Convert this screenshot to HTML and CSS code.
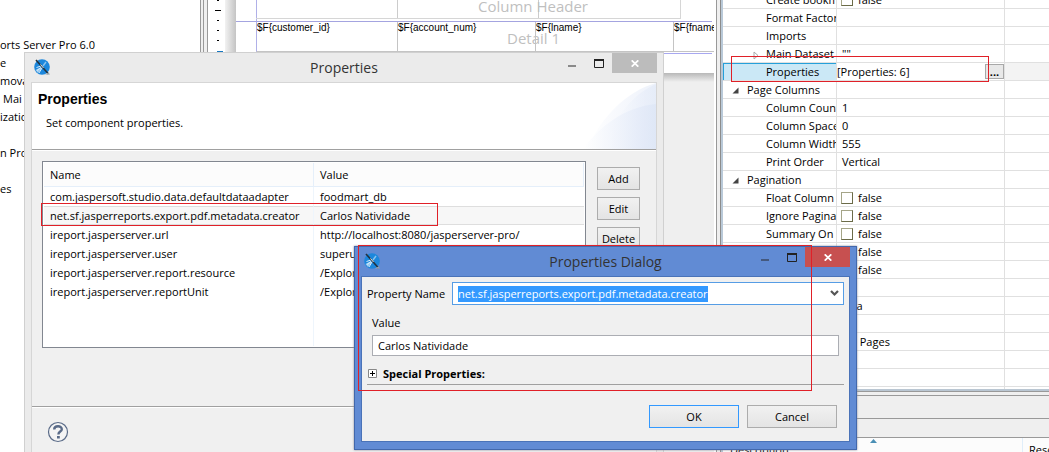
FILE: index.html
```html
<!DOCTYPE html>
<html lang="en">
<head>
<meta charset="utf-8">
<title>Properties</title>
<link rel="stylesheet" href="styles.css">
</head>
<body>
<svg class="defs" width="0" height="0" aria-hidden="true">
  <symbol id="app" viewBox="0 0 16 16">
    <circle cx="8" cy="8" r="7.8" fill="#1c87dc"/>
    <path d="M1.500 11L7 8l1 1.500L4 14z" fill="#9fcdf0"/>
    <path d="M2.500 8.500L7 7M3 11.500l4-3M5 14l3-5" stroke="#d5ebfa" stroke-width="1"/>
    <path d="M9 7l3-4" stroke="#8cc4ee" stroke-width="1.400"/>
    <path d="M2 1l12.500 14" stroke="#22323f" stroke-width="1.600"/>
    <path d="M6.500 5.500l3 3.500" stroke="#e9e5df" stroke-width="1"/>
    <path d="M11 15.500h5l-1.500-2z" fill="#9aa4aa"/>
  </symbol>
  <symbol id="max" viewBox="0 0 10 9">
    <path d="M.5 1.500h9v7h-9z" fill="none" stroke="#222"/><path d="M0 0h10v2H0z" fill="#222"/>
  </symbol>
  <symbol id="x" viewBox="0 0 8 7">
    <path d="M.7.3l6.600 6.400M7.300.3L.7 6.700" stroke="#fff" stroke-width="1.700"/>
  </symbol>
</svg>

<main class="workbench">
  <nav class="tree" aria-label="Repository">
    <span>orts Server Pro 6.0</span><span>e</span><span>mova</span><span class="indent">Mai</span><span>izatio</span><span></span><span>n Pro</span><span></span><span>es</span>
  </nav>
  <div class="sash"></div>
  <section class="editor">
    <svg class="ruler" width="17" height="52" aria-hidden="true">
      <path d="M9 0h2v1H9zM7 10h6v1H7zM9 20h2v1H9zM9 30h2v1H9zM9 40h2v1H9z" fill="#000"/>
      <path d="M9 51h6v1H9z" fill="#1878c0"/>
    </svg>
    <div class="edge"></div>
    <div class="sheet">
      <div class="page">
        <div class="band header"><span class="bandname">Column Header</span></div>
        <div class="band gap"></div>
        <div class="band detail">
          <span class="bandname">Detail 1</span>
          <span class="field f1">$F{customer_id}</span>
          <span class="field f2">$F{account_num}</span>
          <span class="field f3">$F{lname}</span>
          <span class="field f4">$F{fname}</span>
        </div>
      </div>
    </div>
  </section>
  <div class="sash right"></div>
  <aside class="side">
    <div class="props">
      <table class="grid">
        <colgroup><col class="c1"><col class="c2"><col></colgroup>
        <tbody>
          <tr><td>Create bookmarks</td><td><label><input type="checkbox">false</label></td><td></td></tr>
          <tr><td>Format Factory</td><td></td><td></td></tr>
          <tr><td>Imports</td><td></td><td></td></tr>
          <tr class="closed"><td><svg width="6" height="9" aria-hidden="true"><path d="M1 1l4 3.500-4 3.500z" fill="#fff" stroke="#aaa"/></svg>Main Dataset</td><td>""</td><td></td></tr>
          <tr class="current"><td>Properties</td><td><div class="edit"><span>[Properties: 6]</span><button type="button">...</button></div></td><td></td></tr>
          <tr class="group"><td><svg width="7" height="7" aria-hidden="true"><path d="M6.500.5v6h-6z" fill="#444"/></svg>Page Columns</td><td></td><td></td></tr>
          <tr><td>Column Count</td><td>1</td><td></td></tr>
          <tr><td>Column Space</td><td>0</td><td></td></tr>
          <tr><td>Column Width</td><td>555</td><td></td></tr>
          <tr><td>Print Order</td><td>Vertical</td><td></td></tr>
          <tr class="group"><td><svg width="7" height="7" aria-hidden="true"><path d="M6.500.5v6h-6z" fill="#444"/></svg>Pagination</td><td></td><td></td></tr>
          <tr><td>Float Column</td><td><label><input type="checkbox">false</label></td><td></td></tr>
          <tr><td>Ignore Pagination</td><td><label><input type="checkbox">false</label></td><td></td></tr>
          <tr><td>Summary On</td><td><label><input type="checkbox">false</label></td><td></td></tr>
          <tr><td></td><td><label><input type="checkbox">false</label></td><td></td></tr>
          <tr><td></td><td><label><input type="checkbox">false</label></td><td></td></tr>
          <tr><td></td><td></td><td></td></tr>
          <tr><td></td><td>Java</td><td></td></tr>
          <tr><td></td><td></td><td></td></tr>
          <tr><td></td><td>No Pages</td><td></td></tr>
          <tr><td></td><td></td><td></td></tr>
          <tr><td></td><td></td><td></td></tr>
          <tr><td></td><td></td><td></td></tr>
        </tbody>
      </table>
    </div>
    <div class="tabs"></div>
    <div class="bar"></div>
    <div class="problems">
      <span class="desc">Description</span>
      <svg width="7" height="4" aria-hidden="true"><path d="M0 4l3.500-4L7 4z" fill="#4a8fb5"/></svg>
      <span class="res">Resource</span>
    </div>
  </aside>
</main>

<section class="window first" aria-label="Properties">
  <header class="titlebar">
    <svg class="logo" width="16" height="16"><use href="#app"/></svg>
    <h1>Properties</h1>
    <div class="controls">
      <button type="button" class="min" aria-label="Minimize"><i></i></button>
      <button type="button" aria-label="Maximize"><svg width="10" height="9"><use href="#max"/></svg></button>
      <button type="button" class="close" aria-label="Close"><svg width="8" height="7"><use href="#x"/></svg></button>
    </div>
  </header>
  <div class="client">
    <div class="banner">
      <div><h2>Properties</h2><p>Set component properties.</p></div>
      <svg width="73" height="66" viewBox="0 0 73 66" aria-hidden="true">
        <defs><linearGradient id="wash"><stop offset="0" stop-color="#fff"/><stop offset=".8" stop-color="#e3eaf8"/><stop offset="1" stop-color="#dde6f6"/></linearGradient></defs>
        <path d="M4 66C18 34 44 8 73 0v66z" fill="url(#wash)" opacity=".5"/>
        <path d="M22 66C30 36 48 12 73 1v65z" fill="url(#wash)" opacity=".5"/>
        <path d="M0 66C18 42 42 24 73 21v45z" fill="url(#wash)" opacity=".8"/>
      </svg>
    </div>
    <div class="content">
      <div class="listbox">
        <table class="list">
          <colgroup><col class="n"><col></colgroup>
          <thead><tr><th>Name</th><th>Value</th></tr></thead>
          <tbody>
            <tr><td>com.jaspersoft.studio.data.defaultdataadapter</td><td>foodmart_db</td></tr>
            <tr class="selected"><td>net.sf.jasperreports.export.pdf.metadata.creator</td><td>Carlos Natividade</td></tr>
            <tr><td>ireport.jasperserver.url</td><td>http://localhost:8080/jasperserver-pro/</td></tr>
            <tr><td>ireport.jasperserver.user</td><td>superuser</td></tr>
            <tr><td>ireport.jasperserver.report.resource</td><td>/Explorer</td></tr>
            <tr><td>ireport.jasperserver.reportUnit</td><td>/Explorer</td></tr>
            <tr class="rest"><td></td><td></td></tr>
          </tbody>
        </table>
      </div>
      <div class="actions">
        <button type="button" class="btn">Add</button>
        <button type="button" class="btn">Edit</button>
        <button type="button" class="btn">Delete</button>
      </div>
    </div>
    <footer>
      <button type="button" class="help" aria-label="Help"><svg width="22" height="22" viewBox="0 0 22 22"><circle cx="11" cy="11" r="9.500" fill="#f4f4f4" stroke="#5a6b88" stroke-width="1.200"/><path d="M7.200 8.600C7.200 4.200 14.800 4.200 14.800 8.200 14.800 10.600 11.400 10.600 11.400 13.400" fill="none" stroke="#5a6b88" stroke-width="2.400"/><path d="M10 15h2.800v2.500H10z" fill="#5a6b88"/></svg></button>
    </footer>
  </div>
</section>

<section class="window second" role="dialog" aria-label="Properties Dialog">
  <header class="titlebar">
    <svg class="logo" width="16" height="16"><use href="#app"/></svg>
    <h1>Properties Dialog</h1>
    <div class="controls">
      <button type="button" class="min" aria-label="Minimize"><i></i></button>
      <button type="button" aria-label="Maximize"><svg width="10" height="9"><use href="#max"/></svg></button>
      <button type="button" class="close" aria-label="Close"><svg width="8" height="7"><use href="#x"/></svg></button>
    </div>
  </header>
  <form class="client">
    <div class="namerow">
      <label for="pname">Property Name</label>
      <div class="combo">
        <input id="pname" type="text" value="net.sf.jasperreports.export.pdf.metadata.creator" spellcheck="false" autofocus>
        <button type="button" aria-label="Show names"><svg width="9" height="7" viewBox="0 0 9 7"><path d="M1 1l3.500 3.500L8 1" fill="none" stroke="#555" stroke-width="2.200"/></svg></button>
      </div>
    </div>
    <div class="valuerow">
      <label for="pvalue">Value</label>
      <input id="pvalue" type="text" value="Carlos Natividade" spellcheck="false">
    </div>
    <button type="button" class="expander"><svg width="9" height="9" aria-hidden="true"><path d="M.5.5h8v8h-8z" fill="#fff" stroke="#888"/><path d="M2 4h5v1H2zM4 2h1v5H4z" fill="#000"/></svg>Special Properties:</button>
    <div class="buttons">
      <button type="button" class="btn ok">OK</button>
      <button type="button" class="btn">Cancel</button>
    </div>
  </form>
</section>

<div class="mark m1"></div>
<div class="mark m2"></div>
<div class="mark m3"></div>
<script src="app.js"></script>
</body>
</html>
```

FILE: styles.css
```css
* { box-sizing: border-box; }
body {
  margin: 0;
  height: 100vh;
  overflow: hidden;
  position: relative;
  background: #fff;
  color: #000;
  font: 11px/16px "Open Sans", "Noto Sans", sans-serif;
}
button, input { font: inherit; color: inherit; }
button { padding: 0; border: 0; background: none; }
h1, h2, p { margin: 0; font-weight: normal; }
svg { display: block; flex: none; }
.defs { position: absolute; }

/* workbench */
.workbench {
  display: grid;
  grid-template-columns: 200px 8px 508px 7px 1fr;
  height: 100vh;
}
.tree { display: flex; flex-direction: column; padding-top: 36px; overflow: hidden; white-space: nowrap; }
.tree span { height: 18px; line-height: 18px; }
.tree .indent { padding-left: 3px; }
.sash {
  background: #efefef;
  border: solid #999;
  border-width: 0 1px;
  box-shadow: inset 2px 0 #efefef, inset 3px 0 #999;
}
.sash.right { border-right: 2px solid #b9c9d8; box-shadow: inset -1px 0 #8c8c8c, inset 2px 0 #efefef; }
.editor { display: grid; grid-template-columns: 17px 11px 1fr; background: #efefef; overflow: hidden; }
.ruler { background: #fff; }
.edge { height: 74px; background: linear-gradient(90deg, #f2f2f2, #c4c4c4); }
.sheet { padding-right: 2px; background: linear-gradient(#fff 73px, #b8b8b8 73px, #efefef 82px); overflow: hidden; border-right: 2px solid #fff; }
.page { position: relative; height: 73px; }
.page::before { content: ""; position: absolute; top: 0; left: 20px; height: 73px; border-left: 1px solid #b0b0e8; }
.band { position: relative; }
.band.header { height: 19px; margin-left: 20px; margin-right: 31px; border: solid #d6d6d6; border-width: 0 1px 1px 0; background: linear-gradient(#ccc, #ccc) 141px 0 / 1px 100% no-repeat, linear-gradient(#ccc, #ccc) 282px 0 / 1px 100% no-repeat; }
.band.gap { height: 3px; border-bottom: 1px solid #a4a4e0; }
.band.detail { height: 32px; border-bottom: 1px solid #a8a8f0; }
.bandname { position: absolute; color: #bfbfbf; font-size: 15px; line-height: 24px; white-space: nowrap; }
.header .bandname { left: 222px; top: -6px; }
.detail .bandname { left: 271px; top: 4px; }
.field { position: absolute; top: 0; height: 30px; width: 141px; border: solid #c4c4c4; border-width: 0 0 1px 1px; font: 10px/12px "Liberation Sans", sans-serif; white-space: nowrap; }
.f1 { left: 20px; border-left-color: #b0b0e8; }
.f2 { left: 161px; }
.f3 { left: 299px; }
.f4 { left: 437px; }

/* property sheet */
.side { display: flex; flex-direction: column; min-width: 0; background: #efefef; overflow: hidden; }
.props { height: 391px; flex: none; overflow: hidden; background: #fff; border-bottom: 2px solid #b9c6d2; }
.grid { width: 100%; margin-top: -9px; table-layout: fixed; border-collapse: separate; border-spacing: 0; }
.c1 { width: 114px; }
.c2 { width: 168px; }
.grid td { height: 18px; padding: 0 0 0 5px; line-height: 17px; white-space: nowrap; overflow: hidden; border: solid #e0e0e0; border-width: 0 1px 1px 0; }
.grid td:first-child { padding-left: 43px; }
.grid td:last-child { border-right: 0; }
.grid .group td:first-child { padding-left: 9px; }
.grid svg { display: inline-block; margin-right: 8px; }
.grid .closed td:first-child { padding-left: 30px; }
.grid .closed svg { margin-right: 7px; vertical-align: -2px; }
.grid .current td { background: #f3f3f3; }
.grid .current td:first-child { background: #cbe8f6; box-shadow: inset 1px 1px #26a0da; }
.grid .current td:nth-child(2) { padding: 0; background: #fff; }
.edit { display: flex; align-items: center; justify-content: space-between; height: 17px; line-height: 15px; }
.edit button { width: 19px; height: 15px; line-height: 10px; border: 1px solid #a8a8a8; background: #e8e8e8; font-weight: bold; }
.grid label { display: flex; align-items: center; gap: 5px; margin-left: -1px; }
.grid input { appearance: none; width: 12px; height: 12px; margin: 0; border: 1px solid #6b6b48; border-top-color: #a5a588; border-left-color: #a5a588; background: #fff; }
.tabs { height: 28px; flex: none; border: solid #999; border-width: 1px 0; box-shadow: inset 0 3px #efefef, inset 0 4px #999; }
.bar { height: 19px; flex: none; border-bottom: 1px solid #999; }
.problems { display: grid; grid-template-columns: 140px 1fr auto; height: 26px; flex: none; padding-left: 7px; background: #fcfcfc; line-height: 24px; }
.problems svg { margin-top: 1px; }
.problems .res { width: 27px; padding-left: 6px; border-left: 1px solid #e0eefa; overflow: hidden; }

/* windows */
.window { position: absolute; display: flex; flex-direction: column; }
.titlebar { display: grid; grid-template-columns: 50px 1fr 50px; height: 29px; flex: none; position: relative; }
.titlebar h1 { text-align: center; font-size: 14px; line-height: 30px; color: #333; }
.logo { margin: 6px 0 0 9px; }
.controls { position: absolute; right: 6px; top: 0; display: flex; }
.controls button { display: grid; place-items: center; width: 27px; height: 20px; }
.controls .min { align-items: center; padding-top: 6px; }
.min i { width: 8px; height: 2px; background: #8a8a8a; }
.controls .close { width: 45px; background: #bcbcbc; }
.btn { height: 23px; border: 1px solid #acacac; background: linear-gradient(#f1f1f1, #e4e4e4); text-align: center; }
.first { left: 24px; top: 52px; width: 640px; height: 420px; background: #ebebeb; border: 1px solid #d0d0d0; }
.first .client { flex: 1; display: flex; flex-direction: column; margin: 0 6px; border: 1px solid #d6d6d6; background: #f0f0f0; }
.banner { display: flex; justify-content: space-between; height: 67px; background: #fff; border-bottom: 1px solid #a0a0a0; padding-left: 6px; }
.banner h2 { margin-top: 8px; font: bold 14px/17px "Liberation Sans", sans-serif; }
.banner p { margin: 6px 0 0 8px; line-height: 18px; }
.content { display: flex; gap: 11px; height: 256px; padding: 10px 16px 0 10px; border-top: 1px solid #fff; }
.listbox { flex: 1; height: 187px; border: 1px solid #828790; background: #fff; padding: 1px; }
.list { width: 100%; height: 100%; table-layout: fixed; border-collapse: separate; border-spacing: 0; }
.n { width: 270px; }
.list th { height: 24px; padding: 0 0 0 6px; text-align: left; font-weight: normal; background: #fcfcfc; border: solid #e5effa; border-width: 0 1px 1px 0; }
.list td { height: 19px; padding: 0 0 0 6px; white-space: nowrap; line-height: 17px; border-right: 1px solid #eef5fc; }
.list td:last-child { border-right: 0; }
.list .rest td { height: auto; }
.list .selected td { background: #f7f7f7; border-top: 1px solid #dedede; border-bottom: 1px solid #dedede; }
.actions { display: flex; flex-direction: column; gap: 7px; padding-top: 6px; }
.actions .btn { width: 43px; }
footer { flex: 1; padding: 14px 15px; border-top: 1px solid #a0a0a0; box-shadow: inset 0 1px #fff; }

.second { left: 354px; top: 246px; width: 503px; height: 204px; background: #618bd4; border: 1px solid #4268ac; box-shadow: 0 0 2px #889; }
.second .close { background: #c75050; }
.second .min i { background: #44597f; }
.second .client { flex: 1; display: flex; flex-direction: column; margin: 0 6px 7px; padding: 5px 5px 0; border: 1px solid #4a73b8; background: #f0f0f0; }
.namerow { display: flex; align-items: center; justify-content: space-between; white-space: nowrap; }
.combo { display: flex; align-items: center; width: 392px; height: 23px; padding: 0 4px 0 5px; border: 1px solid #569de5; background: #fff; }
.combo input { flex: 1; min-width: 0; height: 16px; padding: 0; border: 0; outline: 0; background: none; }
.combo input::selection { background: #3399ff; color: #fff; }
.valuerow { display: flex; flex-direction: column; padding: 10px 5px 0; }
.valuerow input { height: 21px; margin-top: 4px; padding: 0 5px; border: 1px solid #abadb3; background: #fff; }
.expander { display: flex; align-items: center; gap: 6px; height: 29px; padding: 7px 0 0 1px; border-bottom: 1px solid #a0a0a0; font-weight: bold; text-align: left; }
.buttons { display: flex; justify-content: flex-end; gap: 8px; padding: 20px 7px 0 0; }
.buttons .btn { width: 90px; }
.buttons .ok { border-color: #3399ff; }

/* annotations */
.mark { position: absolute; border: 1px solid #e02028; pointer-events: none; }
.m1 { left: 731px; top: 56px; width: 258px; height: 26px; }
.m2 { left: 41px; top: 203px; width: 397px; height: 23px; }
.m3 { left: 358px; top: 245px; width: 454px; height: 146px; }
```

FILE: app.js
```js
const nameField = document.getElementById("pname");
nameField.focus();
nameField.select();
```
